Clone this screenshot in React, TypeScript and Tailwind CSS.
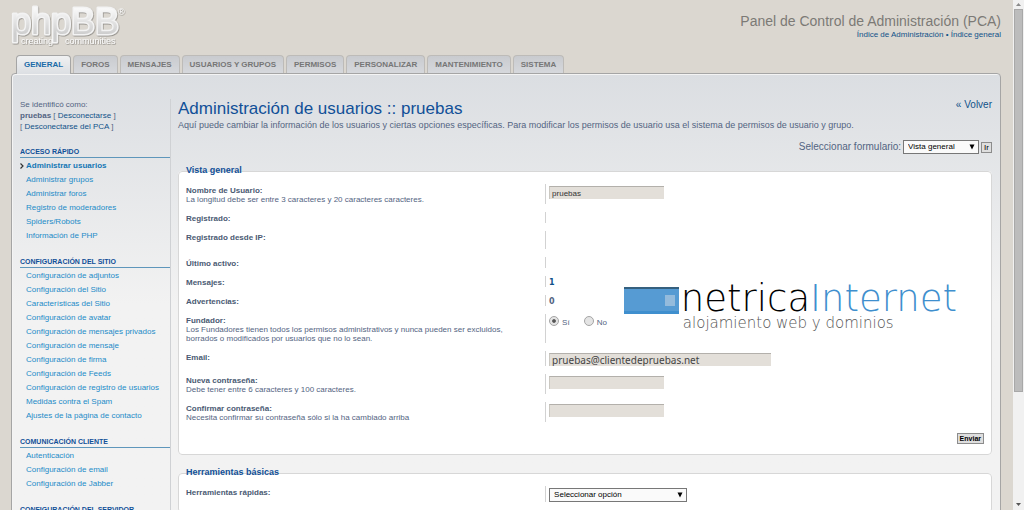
import { useState } from 'react';
import type { ReactNode } from 'react';
import clsx from 'clsx';

const TABS = [
  'General',
  'Foros',
  'Mensajes',
  'Usuarios y grupos',
  'Permisos',
  'Personalizar',
  'Mantenimiento',
  'Sistema',
];

const MENU = [
  {
    title: 'Acceso rápido',
    items: [
      'Administrar usuarios',
      'Administrar grupos',
      'Administrar foros',
      'Registro de moderadores',
      'Spiders/Robots',
      'Información de PHP',
    ],
  },
  {
    title: 'Configuración del sitio',
    items: [
      'Configuración de adjuntos',
      'Configuración del Sitio',
      'Características del Sitio',
      'Configuración de avatar',
      'Configuración de mensajes privados',
      'Configuración de mensaje',
      'Configuración de firma',
      'Configuración de Feeds',
      'Configuración de registro de usuarios',
      'Medidas contra el Spam',
      'Ajustes de la página de contacto',
    ],
  },
  {
    title: 'Comunicación cliente',
    items: ['Autenticación', 'Configuración de email', 'Configuración de Jabber'],
  },
  { title: 'Configuración del servidor', items: [] },
];

const ACTIVE_ITEM = 'Administrar usuarios';

function PhpbbLogo() {
  return (
    <svg className="overflow-visible" width="118" height="44" viewBox="0 0 118 44" role="img" aria-label="phpBB">
      <defs>
        <linearGradient id="logoFill" x1="0" y1="0" x2="0" y2="1">
          <stop offset="0.2" stopColor="#f8f8f8" />
          <stop offset="0.8" stopColor="#cecece" />
        </linearGradient>
        <filter id="logoShadow" x="-10%" y="-10%" width="120%" height="130%">
          <feDropShadow dx="0.6" dy="0.8" stdDeviation="0.6" floodColor="#75726d" floodOpacity="0.8" />
        </filter>
      </defs>
      <g filter="url(#logoShadow)" fontFamily="Liberation Sans, Arial, sans-serif">
        <text
          x="0"
          y="28"
          fontSize="36"
          fill="url(#logoFill)"
          stroke="#f3f3f3"
          strokeWidth="3"
          strokeLinejoin="round"
          paintOrder="stroke"
        >
          phpBB
        </text>
        <text x="10" y="38" fontSize="9" fill="#fafafa">
          creating
        </text>
        <text x="54" y="38" fontSize="9" fill="#fafafa">
          communities
        </text>
        <text x="107" y="9" fontSize="9" fill="#fafafa">
          ®
        </text>
      </g>
    </svg>
  );
}

function HostLogo() {
  return (
    <div className="pointer-events-none absolute right-[34px] top-[109px] flex gap-0.5 font-['DejaVu_Sans'] font-extralight">
      <svg className="mt-1.5" width="55" height="27" viewBox="0 0 55 27" aria-hidden="true">
        <rect width="55" height="27" fill="#569bd3" />
        <rect width="55" height="2" fill="#35607f" />
        <rect y="24" width="55" height="3" fill="#3f8fce" />
        <rect x="41" y="8" width="10" height="11" fill="#94bbdc" />
      </svg>
      <div>
        <div className="text-[37px] leading-9 text-black">
          netrica<span className="text-[#3f8fce]">Internet</span>
        </div>
        <div className="pl-0.5 text-[15px] leading-3 text-[#555555]">alojamiento web y dominios</div>
      </div>
    </div>
  );
}

interface SelectProps {
  id: string;
  className: string;
  options: string[];
}

function Select({ id, className, options }: SelectProps) {
  return (
    <span className={clsx('relative inline-block', className)}>
      <select
        id={id}
        className="block h-3.5 w-full appearance-none border border-[#777777] bg-[#fafafa] pl-1 text-[8px] leading-3 text-black"
      >
        {options.map((option) => (
          <option key={option}>{option}</option>
        ))}
      </select>
      <svg className="pointer-events-none absolute right-1 top-1" width="6" height="6" viewBox="0 0 6 6" aria-hidden="true">
        <path d="M0.500 0.5h5L3 5.5z" fill="#000" />
      </svg>
    </span>
  );
}

function TextInput({ id, type = 'text', value = '', className }: { id: string; type?: string; value?: string; className: string }) {
  return (
    <input
      id={id}
      type={type}
      defaultValue={value}
      className={clsx(
        'block h-[13px] border-l border-t border-l-[#cbc8c1] border-t-[#b3b0ab] bg-[#e3dfd9] px-0.5',
        className,
      )}
    />
  );
}

interface RowProps {
  label: string;
  htmlFor?: string;
  hint?: string;
  children?: ReactNode;
}

function Row({ label, htmlFor, hint, children }: RowProps) {
  return (
    <div className="flex">
      <div className="w-[45%] pr-6 pt-0.5">
        <label htmlFor={htmlFor} className="block font-bold text-[#4a5a73]">
          {label}
        </label>
        {hint && <p>{hint}</p>}
      </div>
      <div className="flex-1 border-l border-[#d2d2d2] pl-[3px] pt-0.5">{children}</div>
    </div>
  );
}

function Panel({ legend, children }: { legend: string; children: ReactNode }) {
  return (
    <fieldset className="relative rounded-sm border border-[#d7d7d7] bg-white px-[7px] pb-2.5 text-[8px] leading-[9px] text-[#536482]">
      <legend className="float-left -mt-[7px] w-full text-[9px] font-bold leading-[10px] text-[#115098]">{legend}</legend>
      <div className="flex w-full flex-col gap-2 pt-[9px]">{children}</div>
    </fieldset>
  );
}

function Radio({ label, value, defaultChecked }: { label: string; value: string; defaultChecked?: boolean }) {
  return (
    <label className="flex items-start gap-[3px]">
      <input
        type="radio"
        name="founder"
        value={value}
        defaultChecked={defaultChecked}
        className="h-2.5 w-2.5 appearance-none rounded-full border border-[#a5a5a5] bg-[#e4e4e4] checked:bg-[radial-gradient(circle,#555_25%,#e4e4e4_40%)]"
      />
      <span className="pt-0.5">{label}</span>
    </label>
  );
}

function Sidebar() {
  return (
    <aside className="w-[151px] shrink-0 border-r border-[#cfd1d4] text-[8px]">
      <div className="leading-[11px] text-[#536482]">
        <p>Se identificó como:</p>
        <p>
          <strong>pruebas</strong> [ <a href="#logout" className="text-[#105289]">Desconectarse</a> ]
        </p>
        <p>
          [ <a href="#logout-acp" className="text-[#105289]">Desconectarse del PCA</a> ]
        </p>
      </div>
      <nav className="mt-[15px] flex flex-col gap-3.5">
        {MENU.map((group) => (
          <section key={group.title}>
            <h2 className="border-b border-[#5e96bb] pb-px text-[7px] font-bold uppercase leading-[9px] text-[#115098]">
              {group.title}
            </h2>
            <ul className="pt-px">
              {group.items.map((item) => (
                <li key={item} className="flex items-center leading-[14px]">
                  <span className="flex w-1.5 shrink-0">
                    {item === ACTIVE_ITEM && (
                      <svg width="4" height="6" viewBox="0 0 4 6" aria-hidden="true">
                        <path d="M0.5 0.5L3 3L0.5 5.5" fill="none" stroke="#333" strokeWidth="1.2" />
                      </svg>
                    )}
                  </span>
                  <a
                    href="#item"
                    className={clsx(
                      'whitespace-nowrap',
                      item === ACTIVE_ITEM ? 'font-bold text-[#1477b5]' : 'text-[#1c8bc8]',
                    )}
                  >
                    {item}
                  </a>
                </li>
              ))}
            </ul>
          </section>
        ))}
      </nav>
    </aside>
  );
}

function Scrollbar() {
  return (
    <div className="flex w-[11px] shrink-0 flex-col items-center bg-[#f1f1f1]" aria-hidden="true">
      <svg className="shrink-0" width="11" height="9" viewBox="0 0 11 9">
        <path d="M3 6h5L5.500 3z" fill="#8a8a8a" />
      </svg>
      <div className="h-3/4 w-[9px] border border-[#a8a8a8] bg-[#bcbcbc]" />
      <svg className="mt-auto shrink-0" width="11" height="9" viewBox="0 0 11 9">
        <path d="M3 2h5L5.500 5z" fill="#555" />
      </svg>
    </div>
  );
}

export default function App() {
  const [tab, setTab] = useState('General');

  return (
    <div className="flex h-screen bg-[#dbd7d0] font-['Liberation_Sans',Arial,sans-serif]">
      <div className="min-w-0 flex-1 overflow-hidden pl-[11px] pr-3">
        <header className="flex h-[55px] justify-between pt-1.5">
          <PhpbbLogo />
          <div className="pt-1.5 text-right">
            <h1 className="text-[14px] leading-[18px] text-[#7c7a76]">Panel de Control de Administración (PCA)</h1>
            <p className="text-[8px] leading-[10px] text-[#105289]">
              <a href="#acp">Índice de Administración</a> • <a href="#index">Índice general</a>
            </p>
          </div>
        </header>

        <div className="relative flex gap-0.5 pl-[5px]">
          {TABS.map((name) => (
            <button
              key={name}
              type="button"
              onClick={() => setTab(name)}
              className={clsx(
                'rounded-t border border-b-0 px-[7px] pt-px text-[8px] font-bold uppercase leading-4',
                name === tab
                  ? '-mb-px border-[#a5a5a5] bg-linear-to-b from-[#f0f1f2] to-[#dcdfe3] pb-px text-[#1a6ba8]'
                  : 'border-[#bdbbb8] bg-linear-to-b from-[#c9cbcf] to-[#d6d8dc] text-[#767676]',
              )}
            >
              {name}
            </button>
          ))}
        </div>

        <div className="flex min-h-screen gap-[7px] rounded border border-[#a5a5a5] bg-[#f2f2f2] bg-linear-to-b from-[#dbdee2] to-[#f2f2f2] to-[230px] px-2 pt-[25px] shadow-[inset_1px_1px_0_#f4f4f4]">
          <Sidebar />
          <main className="min-w-0 flex-1">
            <div className="flex justify-between">
              <h2 className="text-[17px] leading-5 text-[#115098]">Administración de usuarios :: pruebas</h2>
              <a href="#back" className="text-[10px] leading-3 text-[#105289]">
                « Volver
              </a>
            </div>
            <p className="text-[9px] leading-3 text-[#536482]">
              Aquí puede cambiar la información de los usuarios y ciertas opciones específicas. Para modificar los permisos
              de usuario usa el sistema de permisos de usuario y grupo.
            </p>

            <div className="mb-[17px] mt-[9px] flex items-center justify-end gap-0.5">
              <label htmlFor="mode" className="text-[10px] leading-3 text-[#536482]">
                Seleccionar formulario:
              </label>
              <Select id="mode" className="w-19" options={['Vista general']} />
              <button
                type="button"
                className="border border-[#8c8c8c] bg-[#dedede] px-0.5 text-[8px] leading-[9px] text-black"
              >
                Ir
              </button>
            </div>

            <div className="flex flex-col gap-[18px]">
              <Panel legend="Vista general">
                <Row label="Nombre de Usuario:" htmlFor="user" hint="La longitud debe ser entre 3 caracteres y 20 caracteres caracteres.">
                  <TextInput id="user" value="pruebas" className="w-[115px] text-[8px] text-[#333333]" />
                </Row>
                <Row label="Registrado:" />
                <Row label="Registrado desde IP:">
                  <div className="h-4" />
                </Row>
                <Row label="Último activo:" />
                <Row label="Mensajes:">
                  <strong className="block font-['DejaVu_Sans'] text-[#105289]">1</strong>
                </Row>
                <Row label="Advertencias:">
                  <strong className="block font-['DejaVu_Sans']">0</strong>
                </Row>
                <Row
                  label="Fundador:"
                  hint="Los Fundadores tienen todos los permisos administrativos y nunca pueden ser excluidos, borrados o modificados por usuarios que no lo sean."
                >
                  <div className="flex gap-3.5">
                    <Radio label="Sí" value="1" defaultChecked />
                    <Radio label="No" value="0" />
                  </div>
                </Row>
                <Row label="Email:" htmlFor="email">
                  <TextInput
                    id="email"
                    value="pruebas@clientedepruebas.net"
                    className="w-[222px] font-['Noto_Sans'] text-[10px] text-[#444444]"
                  />
                </Row>
                <Row label="Nueva contraseña:" htmlFor="new-password" hint="Debe tener entre 6 caracteres y 100 caracteres.">
                  <TextInput id="new-password" type="password" className="w-[115px]" />
                </Row>
                <Row
                  label="Confirmar contraseña:"
                  htmlFor="confirm-password"
                  hint="Necesita confirmar su contraseña sólo si la ha cambiado arriba"
                >
                  <TextInput id="confirm-password" type="password" className="w-[115px]" />
                </Row>
                <div className="mt-[3px] flex justify-end">
                  <button
                    type="submit"
                    className="border border-[#8c8c8c] bg-[#dedede] px-0.5 text-[7px] font-bold leading-[9px] text-black"
                  >
                    Enviar
                  </button>
                </div>
                <HostLogo />
              </Panel>

              <Panel legend="Herramientas básicas">
                <Row label="Herramientas rápidas:" htmlFor="quick-tools">
                  <Select id="quick-tools" className="w-[138px]" options={['Seleccionar opción']} />
                </Row>
              </Panel>
            </div>
          </main>
        </div>
      </div>
      <Scrollbar />
    </div>
  );
}
